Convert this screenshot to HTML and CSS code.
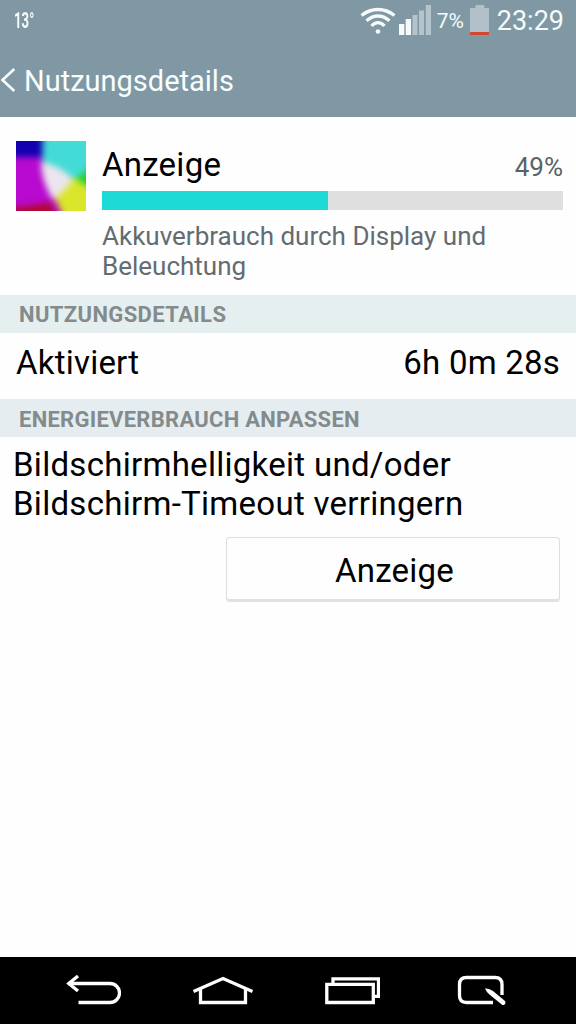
FILE: index.html
```html
<!doctype html>
<html lang="de">
  <head>
    <meta charset="UTF-8" />
    <meta name="viewport" content="width=device-width, initial-scale=1.0" />
    <title>Nutzungsdetails</title>
    <link rel="stylesheet" href="styles.css">
  </head>

  <body>
    <div class="status-bar">
      <span class="temperature">13°</span>
      <div class="status-icons">
        <svg class="wifi" width="36" height="30" viewBox="0 0 36 30" fill="none" stroke="#f5fbfc" stroke-width="3.3">
          <path d="M1.500 10.500Q9 4.500 18 4.500T34.500 10.500" />
          <path d="M6.500 15.800Q12 11 18 11T29.500 15.800" />
          <path d="M11.500 21Q14.500 17.600 18 17.600T24.500 21" />
          <circle cx="18" cy="26.500" r="2.300" fill="#f5fbfc" stroke="none" />
        </svg>
        <svg class="signal" width="33" height="30" viewBox="0 0 33 30">
          <path fill="#f5fbfc" d="M0 19h5.300v11H0zM6.700 14H12v16H6.700z" />
          <path fill="#b3c4cc" d="M13.500 10h5v20h-5zM20 5.500h5V30h-5zM26.800 0H32v30h-5.200z" />
        </svg>
        <span class="battery-text">7%</span>
        <svg class="battery" width="20" height="30" viewBox="0 0 20 30">
          <path fill="#b1c0c9" d="M5.500 0h8.800v3H19v24H0V3h5.500z" />
          <path fill="#d2492f" d="M0 27h19v3H0z" />
        </svg>
        <span class="clock">23:29</span>
      </div>
    </div>

    <div class="header">
      <svg class="back" width="16" height="26" viewBox="0 0 16 26" fill="none" stroke="#f8fdfe" stroke-width="2.600">
        <path d="M14.300 1L2.500 12l11.800 11" />
      </svg>
      <h1 class="header-title">Nutzungsdetails</h1>
    </div>

    <div class="content">
      <div class="usage">
        <svg class="usage-icon" width="70" height="70" viewBox="0 0 70 70">
          <defs>
            <filter id="soft" x="-20%" y="-20%" width="140%" height="140%" color-interpolation-filters="sRGB">
              <feGaussianBlur stdDeviation="3.200" />
            </filter>
          </defs>
          <rect width="70" height="70" fill="#b80ad0" />
          <g filter="url(#soft)">
            <path fill="#1200b0" d="M-10-10h38v26H-10z" />
            <path fill="#b00830" d="M-10 67q28-2 44-6l10 24H-10z" />
            <path fill="#23d126" d="M82 20L54 38l28 26z" />
            <path fill="#43dbd7" d="M27-10h55v30L60 38 26 26z" />
            <path fill="#d9e62b" d="M37 55L57 36q9 6 25 16v32H50Q44 66 37 55z" />
            <path fill="#ece5ee" d="M25 21q18 3 32 17-6 10-20 21Q25 40 25 21z" />
          </g>
        </svg>
        <div class="usage-info">
          <div class="usage-head">
            <span class="usage-name">Anzeige</span>
            <span class="usage-percent">49%</span>
          </div>
          <div class="progress">
            <div class="progress-value" style="width: 49%"></div>
          </div>
          <p class="usage-desc">Akkuverbrauch durch Display und<br />Beleuchtung</p>
        </div>
      </div>

      <h2 class="section-title section-details">NUTZUNGSDETAILS</h2>
      <div class="row">
        <span class="row-label">Aktiviert</span>
        <span class="row-value">6h 0m 28s</span>
      </div>

      <h2 class="section-title section-adjust">ENERGIEVERBRAUCH ANPASSEN</h2>
      <p class="hint">Bildschirmhelligkeit und/oder<br />Bildschirm-Timeout verringern</p>
      <button class="button">Anzeige</button>
    </div>

    <div class="nav-bar">
      <svg class="nav-back" width="56" height="32" viewBox="0 0 56 32" fill="none" stroke="#fff" stroke-width="3.300">
        <path d="M3 10.500h42a9.500 9.500 0 0 1 0 19H13.500" />
        <path d="M13 3L3.800 10.500 13 18" />
      </svg>
      <svg class="nav-home" width="62" height="32" viewBox="0 0 62 32" fill="none" stroke="#fff" stroke-width="3.300">
        <path d="M1.500 18.500L31 5.500l29.500 13" />
        <path d="M8.500 15.500v14h45v-14" />
      </svg>
      <svg class="nav-recent" width="56" height="32" viewBox="0 0 56 32" fill="none" stroke="#fff" stroke-width="3.300">
        <path d="M2.800 11.300h46.500v18.200H2.800z" />
        <path d="M9 11V5.800h45.500v17.500H50" />
      </svg>
      <svg class="nav-memo" width="50" height="32" viewBox="0 0 50 32" fill="none" stroke="#fff" stroke-width="3.300">
        <path d="M36 29.500H9.500q-7 0-7-7v-11q0-7 7-7H38q7 0 7 7V22" />
        <path fill="#fff" stroke="none" d="M28 15.500q4-.5 8 2.500l12 10q1.500 3-2 4.500L33 22q-3.500-2.500-5-6.500z" />
      </svg>
    </div>
  </body>
</html>
```
FILE: styles.css
```css
html,
body {
  width: 100%;
  height: 100%;
  margin: 0;
  padding: 0;
  overflow: hidden;
}

body {
  display: flex;
  flex-direction: column;
  background-color: #fefefe;
  color: #000;
  font-family: Roboto, "Liberation Sans", sans-serif;
}

h1,
h2,
p {
  margin: 0;
  font-weight: 400;
}

.status-bar {
  flex: 0 0 42px;
  display: flex;
  justify-content: space-between;
  background-color: #8098a3;
  color: #f5fbfc;
}

.temperature {
  margin-left: 14px;
  font-size: 22px;
  font-weight: 700;
  line-height: 41px;
  transform: scaleX(0.6);
  transform-origin: left;
}

.status-icons {
  display: flex;
  padding: 5px 12px 0 0;
}

.signal {
  margin-left: 3px;
}

.battery-text {
  width: 33px;
  margin-left: 5px;
  font-size: 21px;
  line-height: 32px;
}

.clock {
  margin-left: 7px;
  font-size: 27px;
  line-height: 33px;
}

.header {
  box-sizing: border-box;
  flex: 0 0 75px;
  display: flex;
  align-items: center;
  padding-top: 2px;
  background-color: #8098a3;
}

.header-title {
  margin-left: 8px;
  color: #f8fdfe;
  font-size: 29px;
  line-height: 40px;
}

.content {
  flex: 1;
  display: flex;
  flex-direction: column;
}

.usage {
  box-sizing: border-box;
  height: 178px;
  display: flex;
  gap: 16px;
  padding: 24px 13px 0 16px;
}

.usage-info {
  flex: 1;
}

.usage-head {
  height: 50px;
  display: flex;
  align-items: baseline;
  justify-content: space-between;
}

.usage-name {
  font-size: 33px;
  letter-spacing: 0.25px;
  line-height: 48px;
}

.usage-percent {
  color: #596367;
  font-size: 26px;
}

.progress {
  height: 19px;
  background-color: #dfdfdf;
}

.progress-value {
  height: 100%;
  background-color: #1ddad6;
}

.usage-desc {
  margin-top: 11px;
  color: #636c70;
  font-size: 26px;
  line-height: 30px;
  white-space: nowrap;
}

.section-title {
  height: 38px;
  padding-left: 19px;
  background-color: #e6eff0;
  color: #838b8c;
  font-size: 22px;
  font-weight: 700;
  letter-spacing: 0.38px;
  line-height: 39px;
}

.row {
  height: 66px;
  display: flex;
  justify-content: space-between;
  padding: 0 16px;
  font-size: 33px;
  letter-spacing: 0.22px;
  line-height: 60px;
}

.section-adjust {
  background-color: #e6edf0;
  letter-spacing: 0.27px;
  line-height: 41px;
}

.hint {
  margin-top: 8px;
  padding-left: 13px;
  font-size: 33px;
  letter-spacing: 0.28px;
  line-height: 39px;
  white-space: nowrap;
}

.button {
  box-sizing: border-box;
  width: 334px;
  height: 65px;
  align-self: flex-end;
  margin: 14px 16px 0 0;
  padding: 3px 0 0 3px;
  border: 1px solid #dcdfdf;
  border-bottom: 3px solid #e0e2e2;
  border-radius: 4px;
  background-color: #fefefe;
  color: #000;
  font-family: inherit;
  font-size: 33px;
  letter-spacing: 0.2px;
}

.nav-bar {
  box-sizing: border-box;
  flex: 0 0 67px;
  display: flex;
  align-items: flex-start;
  padding: 16px 0 0 65px;
  background-color: #000;
}

.nav-home {
  margin-left: 71px;
}

.nav-recent {
  margin-left: 70px;
}

.nav-memo {
  margin-left: 77px;
}
```
